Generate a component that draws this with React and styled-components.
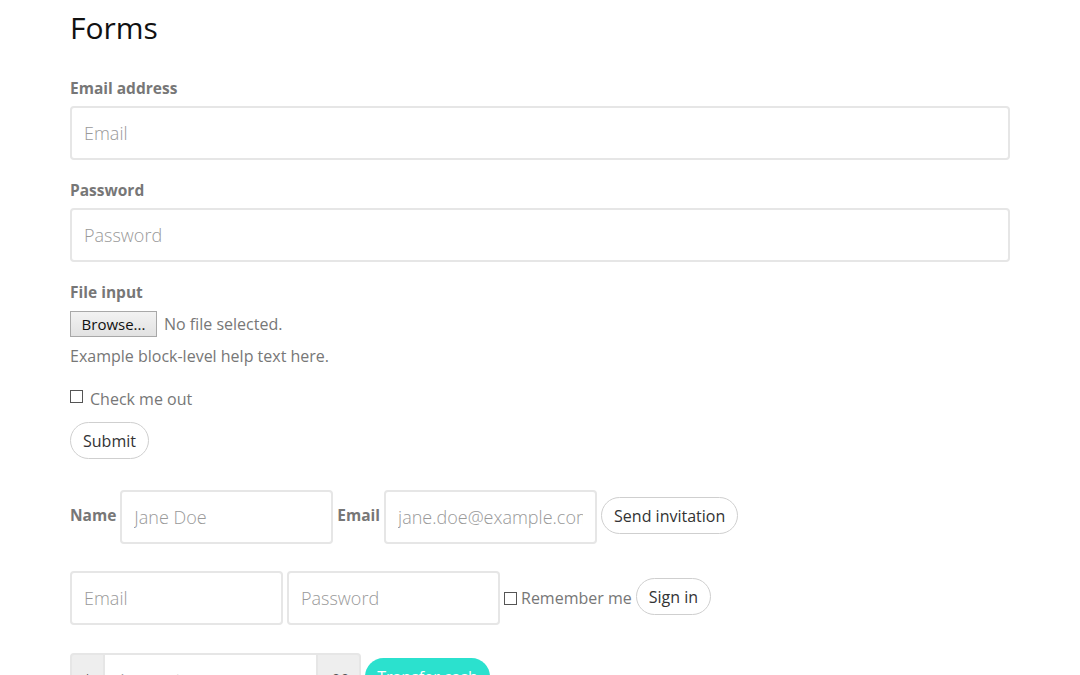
import React from "react";
import styled, { createGlobalStyle } from "styled-components";

const FONT = `"Open Sans", Lato, sans-serif`;

const Global = createGlobalStyle`
  html, body { margin: 0; padding: 0; background: #fff; }
  body { font-family: ${FONT}; color: #777; font-size: 16px; overflow: hidden; }
  * { box-sizing: border-box; }
`;

const Page = styled.div`
  width: 940px;
  margin-left: 70px;
  height: 675px;
  overflow: hidden;
`;

const Title = styled.h1`
  margin: 10px 0 0;
  font-size: 30px;
  font-weight: 400;
  line-height: 36px;
  color: #111;
`;

const Group = styled.div`
  margin-top: ${(p) => p.$mt || 0}px;
`;

const Label = styled.label`
  display: block;
  font-weight: 700;
  font-size: 15.5px;
  line-height: 22px;
  color: #777;
  margin-bottom: 7px;
`;

const Input = styled.input`
  display: block;
  width: ${(p) => p.$w || "100%"};
  height: 54px;
  padding: 0 12px;
  border: 2px solid #e6e6e6;
  border-radius: 4px;
  font-family: ${FONT};
  font-size: 18px;
  font-weight: 300;
  color: #555;
  outline: none;
  background: #fff;
  flex: none;
  &::placeholder { color: #999; font-weight: 300; }
`;

const FileRow = styled.div`
  display: flex;
  align-items: center;
  gap: 7px;
  height: 27px;
`;

const BrowseButton = styled.button`
  height: 26px;
  width: 87px;
  padding: 0;
  font-family: ${FONT};
  font-size: 15px;
  color: #111;
  background: linear-gradient(#f2f2f2, #e2e2e2);
  border: 1px solid #a8a8a8;
  border-radius: 0;
`;

const Muted = styled.span`
  color: #777;
  font-size: 16px;
  line-height: 22px;
`;

const Help = styled.p`
  margin: 8px 0 0;
  font-size: 16px;
  line-height: 22px;
  color: #777;
`;

const CheckLabel = styled.label`
  display: flex;
  align-items: center;
  gap: ${(p) => p.$gap || 7}px;
  color: #777;
  font-size: 16px;
  line-height: 22px;
  white-space: nowrap;
`;

const Box = styled.span`
  display: inline-block;
  width: 13px;
  height: 13px;
  border: 1px solid #555;
  background: #fff;
  flex: none;
  margin-top: ${(p) => p.$mt || 0}px;
`;

const PillButton = styled.button`
  height: 37px;
  padding: 0 12px;
  border-radius: 19px;
  border: 1px solid #cfcfcf;
  background: #fff;
  color: #333;
  font-family: ${FONT};
  font-size: 16px;
  white-space: nowrap;
  flex: none;
  margin-top: ${(p) => p.$mt || 0}px;
`;

const InlineRow = styled.div`
  display: flex;
  align-items: center;
  gap: 4px;
  margin-top: ${(p) => p.$mt || 0}px;
`;

const InlineLabel = styled.label`
  font-weight: 700;
  font-size: 15.5px;
  color: #777;
  margin-top: -4px;
`;

const InputGroup = styled.div`
  display: flex;
  height: 54px;
  flex: none;
`;

const Addon = styled.span`
  display: flex;
  align-items: center;
  justify-content: center;
  width: ${(p) => p.$w}px;
  background: #eee;
  border: 2px solid #e6e6e6;
  border-radius: ${(p) => (p.$left ? "4px 0 0 4px" : "0 4px 4px 0")};
  color: #555;
  font-size: 16px;
`;

const GroupInput = styled(Input)`
  width: 211px;
  border-radius: 0;
  border-left: none;
  border-right: none;
`;

const CashButton = styled.button`
  align-self: flex-start;
  margin-top: 5px;
  height: 37px;
  width: 125px;
  border-radius: 19px;
  border: none;
  background: #2be1ce;
  color: #fff;
  font-family: ${FONT};
  font-size: 16px;
`;

export default function App() {
  return (
    <>
      <Global />
      <Page>
        <Title>Forms</Title>
        <Group $mt={31}>
          <Label>Email address</Label>
          <Input type="email" placeholder="Email" />
        </Group>
        <Group $mt={19}>
          <Label>Password</Label>
          <Input type="password" placeholder="Password" />
        </Group>
        <Group $mt={19}>
          <Label>File input</Label>
          <FileRow>
            <BrowseButton>Browse...</BrowseButton>
            <Muted>No file selected.</Muted>
          </FileRow>
          <Help>Example block-level help text here.</Help>
        </Group>
        <Group $mt={21}>
          <CheckLabel>
            <Box $mt={-5} />
            Check me out
          </CheckLabel>
        </Group>
        <Group $mt={12}>
          <PillButton>Submit</PillButton>
        </Group>

        <InlineRow $mt={31}>
          <InlineLabel>Name</InlineLabel>
          <Input $w="213px" placeholder="Jane Doe" />
          <InlineLabel>Email</InlineLabel>
          <Input $w="213px" placeholder="jane.doe@example.com" />
          <PillButton $mt={-3}>Send invitation</PillButton>
        </InlineRow>

        <InlineRow $mt={27}>
          <Input $w="213px" placeholder="Email" />
          <Input $w="213px" placeholder="Password" />
          <CheckLabel $gap={4}>
            <Box />
            Remember me
          </CheckLabel>
          <PillButton $mt={-3}>Sign in</PillButton>
        </InlineRow>

        <InlineRow $mt={28}>
          <InputGroup>
            <Addon $w={35} $left>$</Addon>
            <GroupInput placeholder="Amount" />
            <Addon $w={45}>.00</Addon>
          </InputGroup>
          <CashButton>Transfer cash</CashButton>
        </InlineRow>
      </Page>
    </>
  );
}
